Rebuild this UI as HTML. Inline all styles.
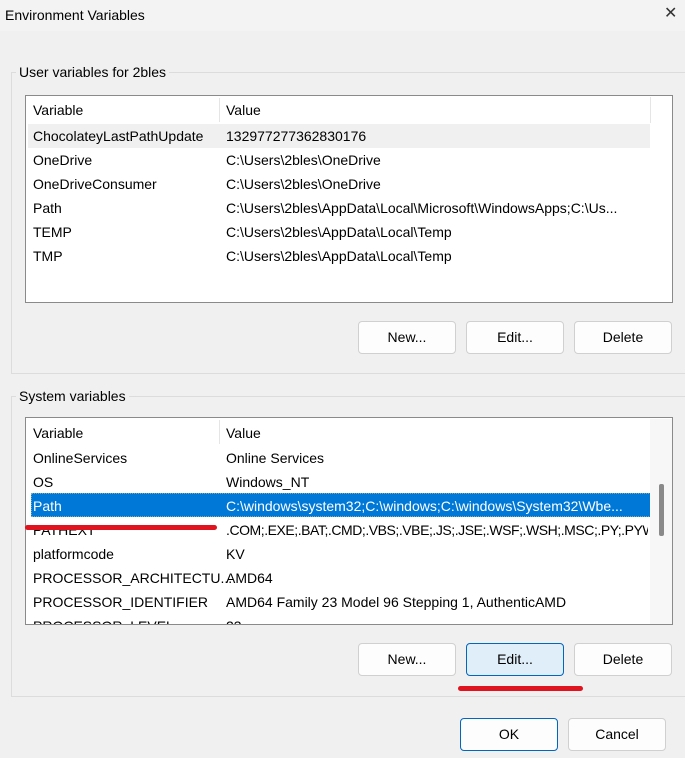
<!DOCTYPE html><html><head><style>
body{margin:0;width:685px;height:758px;background:#f0f0f0;font-family:"Liberation Sans",sans-serif;font-size:14px;color:#000;position:relative;overflow:hidden}
div{position:absolute;box-sizing:border-box}
.t{white-space:nowrap;line-height:24px}
.grp{border:1px solid #dcdcdc}
.lbl{background:#f0f0f0;padding:0 3px;line-height:16px}
.list{background:#fff;border:1px solid #8a8a8a;overflow:hidden}
.btn{background:#fdfdfd;border:1px solid #d0d0d0;border-radius:4px;text-align:center;line-height:30px}
.red{background:#e0141e;border-radius:3px;height:5px}
</style></head><body>
<div style="left:0;top:0;width:685px;height:31px;background:#f3f3f3"></div>
<div class="t" style="left:5px;top:3px">Environment Variables</div>
<div style="left:664px;top:2px;font-size:16px;line-height:24px;color:#333;font-weight:300">✕</div>

<div class="grp" style="left:11px;top:72px;width:690px;height:302px"></div>
<div class="lbl" style="left:16px;top:64px">User variables for 2bles</div>
<div class="list" style="left:25px;top:95px;width:648px;height:208px">
 <div style="left:2px;top:1px;width:622px;height:26px;background:#fff"></div>
 <div style="left:193px;top:2px;width:1px;height:24px;background:#e5e5e5"></div>
 <div style="left:624px;top:1px;width:1px;height:26px;background:#e5e5e5"></div>
 <div style="left:2px;top:28px;width:622px;height:24px;background:#f0f0f0"></div>
 <div class="t" style="left:7px;top:2px">Variable</div><div class="t" style="left:200px;top:2px">Value</div>
 <div class="t" style="left:7px;top:28px">ChocolateyLastPathUpdate</div><div class="t" style="left:200px;top:28px">132977277362830176</div>
 <div class="t" style="left:7px;top:52px">OneDrive</div><div class="t" style="left:200px;top:52px">C:\Users\2bles\OneDrive</div>
 <div class="t" style="left:7px;top:76px">OneDriveConsumer</div><div class="t" style="left:200px;top:76px">C:\Users\2bles\OneDrive</div>
 <div class="t" style="left:7px;top:100px">Path</div><div class="t" style="left:200px;top:100px">C:\Users\2bles\AppData\Local\Microsoft\WindowsApps;C:\Us...</div>
 <div class="t" style="left:7px;top:124px">TEMP</div><div class="t" style="left:200px;top:124px">C:\Users\2bles\AppData\Local\Temp</div>
 <div class="t" style="left:7px;top:148px">TMP</div><div class="t" style="left:200px;top:148px">C:\Users\2bles\AppData\Local\Temp</div>
</div>
<div class="btn" style="left:358px;top:321px;width:98px;height:33px">New...</div>
<div class="btn" style="left:466px;top:321px;width:98px;height:33px">Edit...</div>
<div class="btn" style="left:574px;top:321px;width:98px;height:33px">Delete</div>

<div class="grp" style="left:11px;top:396px;width:690px;height:301px"></div>
<div class="lbl" style="left:16px;top:388px">System variables</div>
<div class="list" style="left:25px;top:417px;width:648px;height:208px">
 <div style="left:193px;top:2px;width:1px;height:24px;background:#e5e5e5"></div>
 <div style="left:5px;top:75px;width:620px;height:24px;background:#0078d7;border:1px dotted #7ab"></div>
 <div class="t" style="left:7px;top:3px">Variable</div><div class="t" style="left:200px;top:3px">Value</div>
 <div class="t" style="left:7px;top:28px">OnlineServices</div><div class="t" style="left:200px;top:28px">Online Services</div>
 <div class="t" style="left:7px;top:52px">OS</div><div class="t" style="left:200px;top:52px">Windows_NT</div>
 <div class="t" style="left:7px;top:76px;color:#fff">Path</div><div class="t" style="left:200px;top:76px;color:#fff">C:\windows\system32;C:\windows;C:\windows\System32\Wbe...</div>
 <div class="t" style="left:7px;top:100px">PATHEXT</div><div class="t" style="left:200px;top:100px;letter-spacing:-0.45px;width:422px;overflow:hidden">.COM;.EXE;.BAT;.CMD;.VBS;.VBE;.JS;.JSE;.WSF;.WSH;.MSC;.PY;.PYW</div>
 <div class="t" style="left:7px;top:124px">platformcode</div><div class="t" style="left:200px;top:124px">KV</div>
 <div class="t" style="left:7px;top:148px">PROCESSOR_ARCHITECTU...</div><div class="t" style="left:200px;top:148px">AMD64</div>
 <div class="t" style="left:7px;top:172px">PROCESSOR_IDENTIFIER</div><div class="t" style="left:200px;top:172px">AMD64 Family 23 Model 96 Stepping 1, AuthenticAMD</div>
 <div class="t" style="left:7px;top:196px">PROCESSOR_LEVEL</div><div class="t" style="left:200px;top:196px">23</div>
 <div style="left:624px;top:1px;width:22px;height:206px;background:#f7f7f7"></div>
 <div style="left:633px;top:66px;width:5px;height:52px;background:#8a8a8a;border-radius:2px"></div>
</div>
<div class="red" style="left:25px;top:525px;width:192px"></div>
<div class="btn" style="left:358px;top:643px;width:98px;height:33px">New...</div>
<div class="btn" style="left:466px;top:643px;width:98px;height:33px;background:#e0eefa;border-color:#0067c0">Edit...</div>
<div class="btn" style="left:574px;top:643px;width:98px;height:33px">Delete</div>
<div class="red" style="left:458px;top:686px;width:125px"></div>

<div class="btn" style="left:460px;top:718px;width:98px;height:33px;border-color:#0067c0">OK</div>
<div class="btn" style="left:568px;top:718px;width:98px;height:33px">Cancel</div>
</body></html>
